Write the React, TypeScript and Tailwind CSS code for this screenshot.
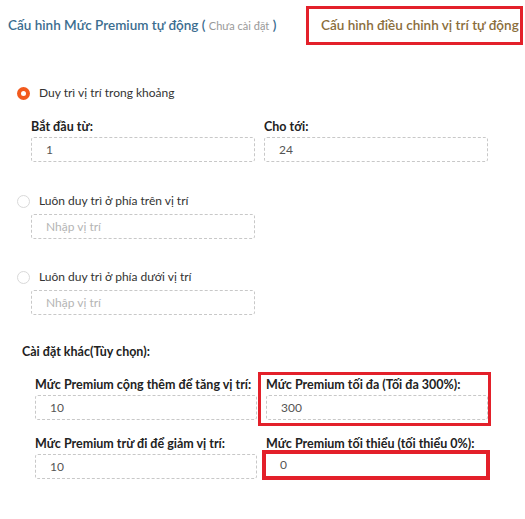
import React from "react";

const font = { fontFamily: "Lato, 'Open Sans', sans-serif" };

function Radio({ checked }: { checked?: boolean }) {
  return checked ? (
    <span className="w-[13px] h-[13px] rounded-full bg-[#f25a1d] flex items-center justify-center shrink-0">
      <span className="w-[5px] h-[5px] rounded-full bg-white" />
    </span>
  ) : (
    <span className="w-[13px] h-[13px] rounded-full border border-[#d9d9d9] bg-white shrink-0" />
  );
}

function Input({ value, placeholder, w }: { value?: string; placeholder?: string; w: string }) {
  return (
    <div className={`${w} h-[25px] border border-dashed border-[#c8c8c8] rounded-[3px] flex items-center pl-[14px] text-[12px] ${value ? "text-[#555]" : "text-[#b5b5b5]"}`}>
      {value ?? placeholder}
    </div>
  );
}

const label = "text-[12.5px] font-bold text-[#222] leading-[15px] whitespace-nowrap";

export default function App() {
  return (
    <div className="w-[525px] h-[519px] bg-white text-[#333] relative overflow-hidden" style={font}>
      {/* header */}
      <div className="flex items-center justify-between h-[47px] pt-[4px] pr-[2px]">
        <div className="pl-[8px] text-[13.5px] font-semibold text-[#3b6d8f] whitespace-nowrap">
          Cấu hình Mức Premium tự động ({" "}
          <span className="text-[11px] font-normal text-[#999]">Chưa cài đặt</span> )
        </div>
        <div className="w-[217px] h-[39px] border-[3px] border-[#e3202a] flex items-center pl-[12px] text-[13.5px] font-semibold text-[#8a6d3b] whitespace-nowrap">
          Cấu hình điều chỉnh vị trí tự động
        </div>
      </div>

      {/* radio 1 */}
      <div className="flex items-center gap-[9px] pl-[17px] mt-[37px] text-[12px] text-[#333]">
        <Radio checked />
        <span>Duy trì vị trí trong khoảng</span>
      </div>
      <div className="flex gap-[9px] pl-[31px] mt-[17px]">
        <div className="flex flex-col">
          <span className={`${label} mb-[3px]`}>Bắt đầu từ:</span>
          <Input value="1" w="w-[224px]" />
        </div>
        <div className="flex flex-col">
          <span className={`${label} mb-[3px]`}>Cho tới:</span>
          <Input value="24" w="w-[224px]" />
        </div>
      </div>

      {/* radio 2 */}
      <div className="flex items-center gap-[9px] pl-[17px] mt-[30px] text-[12px]">
        <Radio />
        <span>Luôn duy trì ở phía trên vị trí</span>
      </div>
      <div className="pl-[31px] mt-[4px]">
        <Input placeholder="Nhập vị trí" w="w-[224px]" />
      </div>

      {/* radio 3 */}
      <div className="flex items-center gap-[9px] pl-[17px] mt-[29px] text-[12px]">
        <Radio />
        <span>Luôn duy trì ở phía dưới vị trí</span>
      </div>
      <div className="pl-[31px] mt-[4px]">
        <Input placeholder="Nhập vị trí" w="w-[224px]" />
      </div>

      {/* other settings */}
      <div className={`pl-[22px] mt-[29px] ${label}`}>Cài đặt khác(Tùy chọn):</div>

      <div className="flex pl-[35px] mt-[13px]">
        <div className="flex flex-col w-[223px] pt-[5px]">
          <span className={`${label} mb-[3px]`}>Mức Premium cộng thêm để tăng vị trí:</span>
          <Input value="10" w="w-[222px]" />
        </div>
        <div className="border-[3px] border-[#e3202a] w-[233px] h-[54px] pl-[5px] pt-[2px] flex flex-col">
          <span className={`${label} mb-[3px]`}>Mức Premium tối đa (Tối đa 300%):</span>
          <Input value="300" w="w-[222px]" />
        </div>
      </div>

      <div className="flex pl-[35px] mt-[10px]">
        <div className="flex flex-col w-[231px]">
          <span className={`${label} mb-[3px]`}>Mức Premium trừ đi để giảm vị trí:</span>
          <Input value="10" w="w-[222px]" />
        </div>
        <div className="flex flex-col">
          <span className={`${label} mb-[-1px]`}>Mức Premium tối thiểu (tối thiểu 0%):</span>
          <div className="ml-[-4px] w-[228px] h-[30px] border-[4px] border-[#e3202a] flex items-center pl-[14px] text-[12px] text-[#555]">0</div>
        </div>
      </div>
    </div>
  );
}
